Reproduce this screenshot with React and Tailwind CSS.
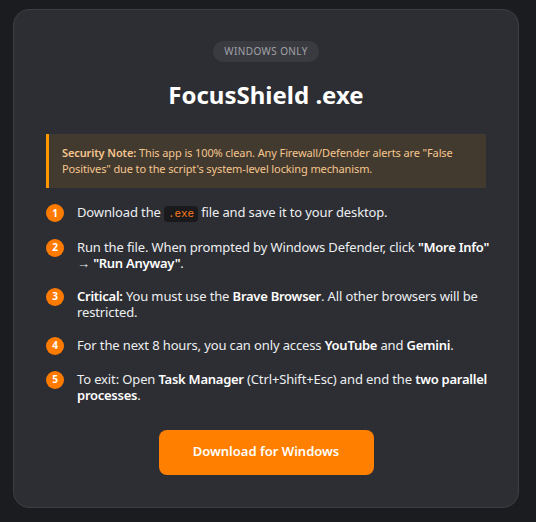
import React from "react";

const B = ({ children }) => <b className="font-semibold tracking-[-0.02em] text-white">{children}</b>;

const steps = [
    <>
        Download the{" "}
        <code className="rounded bg-[#1a1a1c] px-1 py-0.5 font-['Liberation_Mono',monospace] text-[11px] text-[#ff7a1a]">
            .exe
        </code>{" "}
        file and save it to your desktop.
    </>,
    <>
        Run the file. When prompted by Windows Defender, click <B>"More Info"</B> → <B>"Run Anyway"</B>.
    </>,
    <>
        <B>Critical:</B> You must use the <B>Brave Browser</B>. All other browsers will be restricted.
    </>,
    <>
        For the next 8 hours, you can only access <B>YouTube</B> and <B>Gemini</B>.
    </>,
    <>
        To exit: Open <B>Task Manager</B> (Ctrl+Shift+Esc) and end the <B>two parallel processes</B>.
    </>,
];

export default function App() {
    return (
        <div className="min-h-screen bg-[#1b1c1f] pt-[9px] pl-[13px] font-['Noto_Sans',sans-serif]">
            <div className="w-[506px] h-[499px] rounded-2xl border border-[#3d3e43] bg-[#2d2e33] px-8 pt-[31px]">
                {/* Badge */}
                <div className="flex justify-center">
                    <span className="rounded-full bg-[#3a3b41] px-[11px] py-[3px] text-[10px] tracking-[0.04em] text-[#a0a2a8]">
                        WINDOWS ONLY
                    </span>
                </div>

                <h1 className="mt-[15px] text-center text-[24px] font-bold text-white">
                    FocusShield .exe
                </h1>

                {/* Security note */}
                <div className="mt-[21px] border-l-[3px] border-[#ff9800] bg-[#433a2f] px-[13px] py-[11px] text-[11px] leading-4 tracking-[-0.01em] text-[#f5c58e]">
                    <b className="font-semibold">Security Note:</b> This app is 100% clean. Any Firewall/Defender alerts are "False Positives" due to the script's system-level locking mechanism.
                </div>

                {/* Steps */}
                <ol className="mt-[16px] -mr-3 flex flex-col gap-[16px]">
                    {steps.map((step, i) => (
                        <li key={i} className="flex gap-[13px] text-[13px] leading-[16.5px] tracking-[-0.01em] text-[#eceef2]">
                            <span className="flex h-[18px] w-[18px] shrink-0 items-center justify-center rounded-full bg-[#ff7a00] text-[10px] font-bold text-white">
                                {i + 1}
                            </span>
                            <span>{step}</span>
                        </li>
                    ))}
                </ol>

                <div className="mt-[26px] flex justify-center">
                    <button className="h-[45px] w-[215px] rounded-lg bg-[#ff7f00] text-[13px] font-semibold text-white">
                        Download for Windows
                    </button>
                </div>
            </div>
        </div>
    );
}
